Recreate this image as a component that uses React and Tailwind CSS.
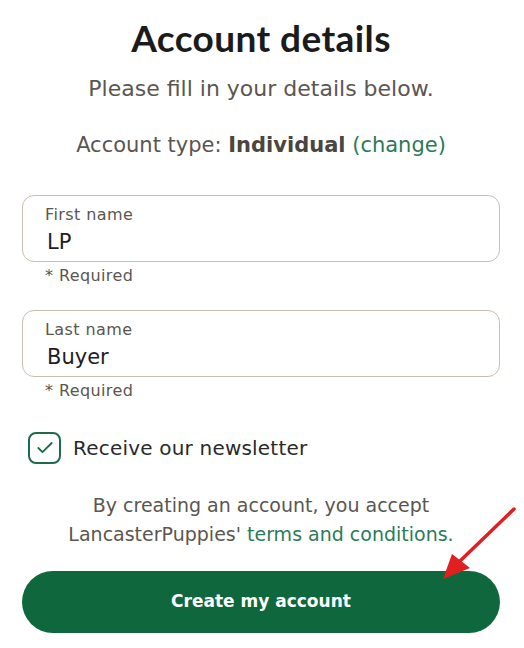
import { Check } from 'lucide-react';

const Field = ({ label, value }) => (
  <div>
    <div className="border border-[#c9bfae] rounded-[12px] h-[67px] px-[22px] pt-[9px]">
      <div className="text-[16px] leading-[20px] tracking-[0.4px] text-[#5b5650]">{label}</div>
      <div className="text-[21px] leading-[26px] text-[#1e1e1e] pl-[2px] mt-[4px]">{value}</div>
    </div>
    <div className="text-[16px] leading-[20px] tracking-[0.4px] text-[#5b5650] pl-[23px] mt-[4px]">* Required</div>
  </div>
);

const App = () => {
  return (
    <div className="relative w-[524px] h-[648px] bg-white overflow-hidden font-['DejaVu_Sans',sans-serif]">
      <div className="w-[478px] ml-[22px] flex flex-col">
        <h1 className="mt-[17px] text-center text-[37px] leading-[42px] font-bold text-[#1b1b1b] font-['Lato',sans-serif] tracking-[0.4px]">
          Account details
        </h1>
        <p className="mt-[16px] text-center text-[22px] leading-[28px] text-[#5b5650]">
          Please fill in your details below.
        </p>
        <p className="mt-[28px] text-center text-[21px] leading-[28px] text-[#5b5650]">
          Account type: <span className="font-bold text-[#4a4540]">Individual</span>{' '}
          <span className="text-[#2e7a58]">(change)</span>
        </p>

        <div className="mt-[36px] flex flex-col gap-[24px]">
          <Field label="First name" value="LP" />
          <Field label="Last name" value="Buyer" />
        </div>

        <label className="mt-[31px] ml-[6px] flex items-center gap-[12px]">
          <span className="w-[33px] h-[32px] border-2 border-[#1d6b4a] rounded-[8px] flex items-center justify-center">
            <Check size={20} strokeWidth={2.2} className="text-[#1d6b4a]" />
          </span>
          <span className="text-[20px] leading-[28px] tracking-[0.2px] text-[#2a2a2a]">Receive our newsletter</span>
        </label>

        <p className="mt-[27px] text-center text-[19px] leading-[29px] text-[#5b5650]">
          By creating an account, you accept
          <br />
          LancasterPuppies' <span className="text-[#2e7a58]">terms and conditions.</span>
        </p>

        <button className="mt-[22px] h-[62px] rounded-full bg-[#0f683d] text-white text-[17px] font-bold font-['DejaVu_Sans',sans-serif]">
          Create my account
        </button>
      </div>

      <svg className="absolute left-0 top-0 pointer-events-none" width="524" height="648">
        <line x1="514" y1="509" x2="458" y2="563" stroke="#e02020" strokeWidth="3.5" strokeLinecap="round" />
        <polygon points="443,579 452,554 470,568" fill="#e02020" />
      </svg>
    </div>
  );
};

export default App;
